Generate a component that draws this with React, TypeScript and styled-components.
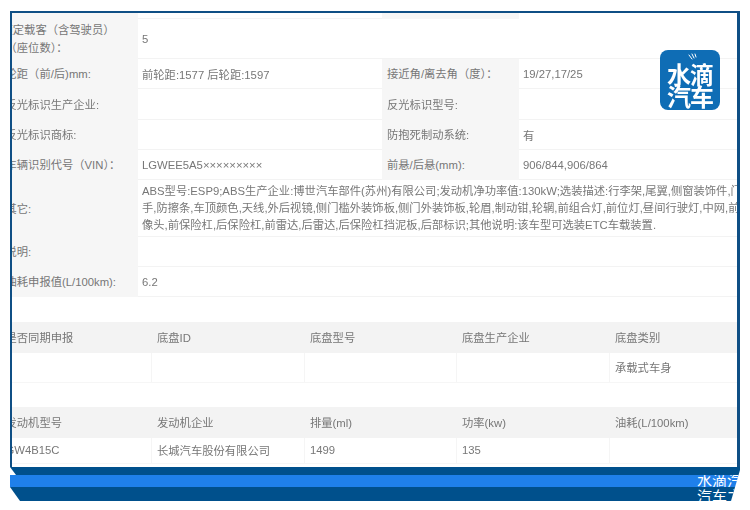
import * as React from 'react'
import styled, { createGlobalStyle } from 'styled-components'

const GlobalStyle = createGlobalStyle`
  html, body {
    margin: 0;
    padding: 0;
    background: #fff;
  }
`

const Page = styled.div`
  position: relative;
  width: 750px;
  height: 510px;
  overflow: hidden;
  padding: 11px 0 0 10px;
  box-sizing: border-box;
  font-family: 'Liberation Sans', 'Noto Sans CJK SC', sans-serif;
  font-size: 11.3px;
  color: #777;
`

const Frame = styled.div`
  width: 730px;
  height: 456px;
  box-sizing: border-box;
  border: solid #0f4f85;
  border-width: 2px 3px 0 2px;
  overflow: hidden;
  background: #fff;
`

// the sheet is a crop of a wider page, so its first column runs under the frame
const Sheet = styled.div`
  width: 737px;
  margin-left: -12px;
  filter: blur(0.45px);
`

const Stub = styled.div`
  display: grid;
  grid-template-columns: 138px 244px 137px 1fr;
  height: 6px;
`

const Row = styled.div<{ $height: number }>`
  display: grid;
  grid-template-columns: 138px 244px 137px 1fr;
  height: ${({ $height }) => $height}px;
`

const WideRow = styled(Row)`
  grid-template-columns: 138px 1fr;
`

const Label = styled.div<{ $hang?: boolean }>`
  display: flex;
  align-items: center;
  background: #f6f6f6;
  padding-left: ${({ $hang }) => ($hang ? 1.5 : 5.5)}px;
  white-space: nowrap;
  line-height: 18px;
`

const Hanging = styled.span`
  display: block;
`

const SecondLine = styled.span`
  display: block;
  padding-left: 4px;
`

const SideLabel = styled(Label)`
  padding-left: 5px;
`

const Value = styled.div`
  display: flex;
  align-items: center;
  padding-left: 4px;
  border-bottom: 1px solid #f3f3f3;
  border-top: 1px solid #f3f3f3;
  margin-top: -1px;
  white-space: nowrap;
  overflow: hidden;
`

const Blank = styled.div`
  border-bottom: 1px solid #f3f3f3;
`

const Notes = styled.div`
  padding: 3px 0 0 4px;
  line-height: 17px;
  border-bottom: 1px solid #f3f3f3;
  overflow: hidden;
  white-space: nowrap;
`

const NoteLine = styled.div``

const Table = styled.div<{ $top: number; $bodyHeight: number }>`
  display: grid;
  grid-template-columns: 152px 153px 152px 153px 1fr;
  grid-template-rows: 31px ${({ $bodyHeight }) => $bodyHeight}px;
  margin-top: ${({ $top }) => $top}px;
`

const HeadCell = styled.div`
  display: flex;
  align-items: center;
  padding: 0 0 2px 5px;
  background: #f3f3f3;
  &:first-child {
    padding-left: 5.5px;
  }
`

const BodyCell = styled.div<{ $first?: boolean; $last?: boolean }>`
  display: flex;
  align-items: center;
  padding: 0 0 2px ${({ $first }) => ($first ? 5.5 : 5)}px;
  border-right: ${({ $last }) => ($last ? 'none' : '1px solid #f5f5f5')};
  border-bottom: 1px solid #f6f6f6;
  box-sizing: border-box;
`

const Logo = styled.div`
  position: absolute;
  left: 660px;
  top: 50px;
  width: 60px;
  height: 60px;
  border-radius: 8px;
  background: #0f6db5;
  color: #fff;
  font-family: 'Noto Sans CJK SC', sans-serif;
  font-weight: 700;
  font-size: 24px;
  line-height: 22px;
  text-align: center;
  box-sizing: border-box;
  padding-top: 13px;
  letter-spacing: -1px;
`

const Spark = styled.svg`
  position: absolute;
  left: 27px;
  top: 3px;
`

const Banner = styled.div`
  display: flex;
  flex-direction: column;
  width: 730px;
  height: 34px;
  clip-path: polygon(0 0, 100% 0, 100% 3px, 721px 100%, 0 100%);
`

const Strip = styled.div<{ $height: number; $colour: string; $cut: string; $pad?: number }>`
  height: ${({ $height }) => $height}px;
  box-sizing: border-box;
  background: ${({ $colour }) => $colour};
  clip-path: ${({ $cut }) => $cut};
  padding: ${({ $pad }) => $pad ?? 0}px 0 0 687px;
  overflow: hidden;
  color: #fff;
  font-family: 'Noto Sans CJK SC', sans-serif;
  font-size: 15px;
  line-height: 10px;
  white-space: nowrap;
`

export default function App() {
  return (
    <Page>
      <GlobalStyle />
      <Frame>
        <Sheet>
          <Stub>
            <Label />
            <div />
            <Label />
            <div />
          </Stub>
          <Row $height={40}>
            <Label $hang>
              <Hanging>
                额定载客（含驾驶员）
                <SecondLine>（座位数）：</SecondLine>
              </Hanging>
            </Label>
            <Value>5</Value>
            <Blank />
            <Blank />
          </Row>
          <Row $height={30}>
            <Label>轮距（前/后)mm:</Label>
            <Value>前轮距:1577 后轮距:1597</Value>
            <SideLabel>接近角/离去角（度）：</SideLabel>
            <Value>19/27,17/25</Value>
          </Row>
          <Row $height={31}>
            <Label>反光标识生产企业:</Label>
            <Value />
            <SideLabel>反光标识型号:</SideLabel>
            <Value />
          </Row>
          <Row $height={30}>
            <Label>反光标识商标:</Label>
            <Value />
            <SideLabel>防抱死制动系统:</SideLabel>
            <Value>有</Value>
          </Row>
          <Row $height={30}>
            <Label>车辆识别代号（VIN）：</Label>
            <Value>LGWEE5A5×××××××××</Value>
            <SideLabel>前悬/后悬(mm):</SideLabel>
            <Value>906/844,906/864</Value>
          </Row>
          <WideRow $height={57}>
            <Label>其它:</Label>
            <Notes>
              <NoteLine>ABS型号:ESP9;ABS生产企业:博世汽车部件(苏州)有限公司;发动机净功率值:130kW;选装描述:行李架,尾翼,侧窗装饰件,门</NoteLine>
              <NoteLine>手,防擦条,车顶颜色,天线,外后视镜,侧门槛外装饰板,侧门外装饰板,轮眉,制动钳,轮辋,前组合灯,前位灯,昼间行驶灯,中网,前摄</NoteLine>
              <NoteLine>像头,前保险杠,后保险杠,前雷达,后雷达,后保险杠挡泥板,后部标识;其他说明:该车型可选装ETC车载装置.</NoteLine>
            </Notes>
          </WideRow>
          <WideRow $height={30}>
            <Label>说明:</Label>
            <Blank />
          </WideRow>
          <WideRow $height={30}>
            <Label>油耗申报值(L/100km):</Label>
            <Value>6.2</Value>
          </WideRow>
          <Table $top={25} $bodyHeight={30}>
            <HeadCell>是否同期申报</HeadCell>
            <HeadCell>底盘ID</HeadCell>
            <HeadCell>底盘型号</HeadCell>
            <HeadCell>底盘生产企业</HeadCell>
            <HeadCell>底盘类别</HeadCell>
            <BodyCell $first />
            <BodyCell />
            <BodyCell />
            <BodyCell />
            <BodyCell $last>承载式车身</BodyCell>
          </Table>
          <Table $top={24} $bodyHeight={26}>
            <HeadCell>发动机型号</HeadCell>
            <HeadCell>发动机企业</HeadCell>
            <HeadCell>排量(ml)</HeadCell>
            <HeadCell>功率(kw)</HeadCell>
            <HeadCell>油耗(L/100km)</HeadCell>
            <BodyCell $first>GW4B15C</BodyCell>
            <BodyCell>长城汽车股份有限公司</BodyCell>
            <BodyCell>1499</BodyCell>
            <BodyCell>135</BodyCell>
            <BodyCell $last />
          </Table>
        </Sheet>
      </Frame>
      <Banner>
        <Strip $height={8} $colour="#00508c" $cut="polygon(0 0, 100% 0, 100% 100%, 6px 100%)" />
        <Strip $height={12} $colour="#1f80ea" $cut="none">
          水滴汽车
        </Strip>
        <Strip $height={14} $colour="#00508c" $cut="polygon(0 0, 100% 0, 100% 100%, 10px 100%)" $pad={4}>
          汽车之家
        </Strip>
      </Banner>
      <Logo>
        <Spark width="14" height="12" viewBox="0 0 14 12" fill="none" stroke="#fff" strokeWidth="1" strokeLinecap="round">
          <path d="M2 2 L5 6" />
          <path d="M5 1 L7 5" />
          <path d="M8 1 L9 4" />
        </Spark>
        水滴
        <br />
        汽车
      </Logo>
    </Page>
  )
}
